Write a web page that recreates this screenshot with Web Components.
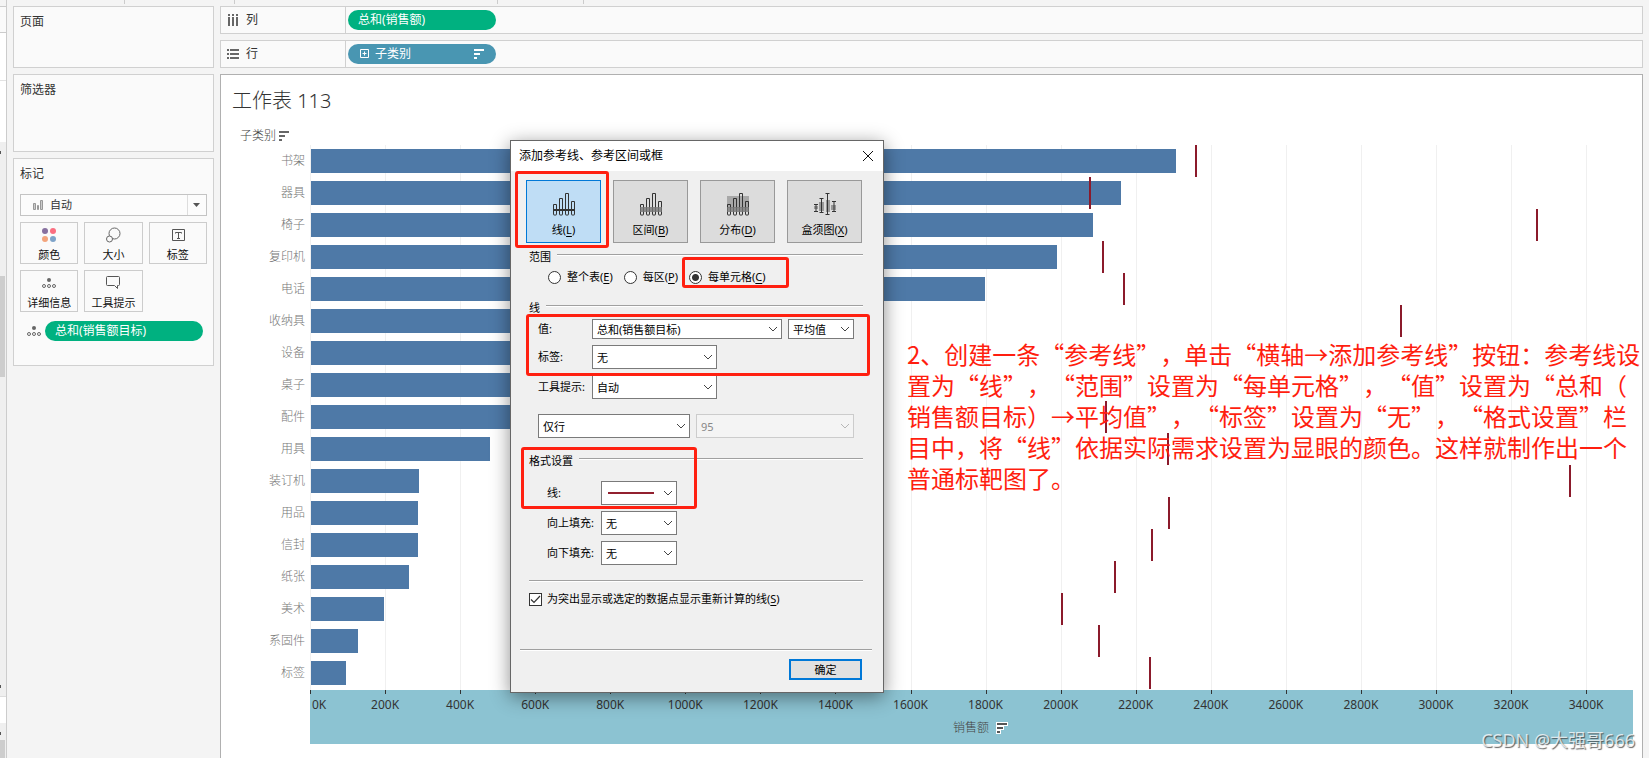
<!DOCTYPE html>
<html lang="zh-CN">
<head>
<meta charset="utf-8">
<title>工作表 113</title>
<style>
html, body { margin: 0; height: 100%; }
body {
  background: #f4f4f4; overflow: hidden; color: #333;
  font: 12px/16px "Noto Sans", "Noto Sans CJK SC", sans-serif;
}
</style>
</head>
<body>
<work-book></work-book>
<script>
const define = (name, html, setup) => customElements.define(name, class extends HTMLElement {
  constructor() {
    super();
    const t = document.createElement('template');
    t.innerHTML = html;
    this.attachShadow({ mode: 'open' }).append(t.content.cloneNode(true));
  }
  connectedCallback() {
    if (this.ready) return;
    this.ready = true;
    if (setup) setup(this, this.shadowRoot);
  }
});

/* ---------- icons ---------- */
const bars = '<path d="M.5 11.500v10q0 .5.5.5h2q.5 0 .5-.5v-10zM6.500 5.500v16q0 .5.5.5h2q.5 0 .5-.5v-16zM12.500.5v21q0 .5.5.5h2q.5 0 .5-.5V.5zM18.500 8.500v13q0 .5.5.5h2q.5 0 .5-.5v-13z" fill="none" stroke="#333"/>';
const ICONS = {
  columns: [12, 12, '<path d="M1 0h2v2H1zM5 0h2v2H5zM9 0h2v2H9zM1 3h2v9H1zM5 3h2v9H5zM9 3h2v9H9z" fill="#666"/>'],
  rows: [12, 12, '<path d="M0 1h2v2H0zM3 1h9v2H3zM0 5h2v2H0zM3 5h9v2H3zM0 9h2v2H0zM3 9h9v2H3z" fill="#666"/>'],
  sort: [10, 10, '<path d="M0 0h10v2H0zM0 4h6v2H0zM0 8h3v2H0z" fill="currentColor"/>'],
  sortlight: [12, 12, '<path d="M0 0h12v4H8v4H5v4H0z" fill="#fff"/><path d="M1 1h10v2H1zM1 5h6v2H1zM1 9h3v2H1z" fill="#555"/>'],
  plus: [10, 10, '<path d="M.5.5h8v8h-8zM2.500 4.500h4M4.500 2.500v4" fill="none" stroke="#fff"/>'],
  auto: [10, 10, '<path d="M.5 3.500h2v6h-2zM4.500 5.500h1v4h-1zM7.500.5h2v9h-2z" fill="#ccc" stroke="#999"/>'],
  color: [16, 16, '<circle cx="4" cy="4" r="3" fill="#87709f"/><circle cx="12" cy="4" r="3" fill="#fb6e80"/><circle cx="4" cy="12" r="3" fill="#f3a47c"/><circle cx="12" cy="12" r="3" fill="#7ea3c9"/>'],
  size: [16, 16, '<circle cx="9.500" cy="6.500" r="5.500" fill="none" stroke="#666"/><circle cx="4.500" cy="12" r="3" fill="#fafafa" stroke="#666"/>'],
  label: [16, 16, '<path d="M2.500 2.500h12v11h-12z" fill="none" stroke="#555"/><path d="M5.500 6.500v-1h6v1M8.500 5.500v6M7 11.500h3" fill="none" stroke="#555"/>'],
  detail: [16, 16, '<circle cx="8" cy="5" r="2" fill="#666"/><g fill="none" stroke="#666"><circle cx="3" cy="11" r="1.500"/><circle cx="8" cy="11" r="1.500"/><circle cx="13" cy="11" r="1.500"/></g>'],
  tooltip: [16, 16, '<path d="M1.500 2.500q0-1 1-1h11q1 0 1 1v7q0 1-1 1h-1v3l-3-3h-7q-1 0-1-1z" fill="none" stroke="#555"/>'],
  line: [22, 23, bars + '<path d="M0 16h22v2H0z" fill="#333"/>'],
  band: [22, 23, bars + '<path d="M0 14h22v5H0z" fill="#777" opacity=".8"/>'],
  dist: [22, 23, '<path d="M0 3h22v12H0z" fill="#a8a8a8"/>' + bars + '<path d="M0 14h22v5H0z" fill="#777" opacity=".8"/>'],
  box: [24, 23, '<path d="M1 13h4v3H1zM6 9h5v9H6zM13 7h4v12h-4zM18 12h5v5h-5z" fill="#999"/><path d="M1 11.500h4M3 11.500v7M1 18.500h4M6.500 5.500h4M8.500 5.500v14M6.500 19.500h4M12.500.5h4M14.500.5v21M12.500 21.500h4M19 8.500h4M21 8.500v10M19 18.500h4" fill="none" stroke="#333"/>'],
  close: [12, 12, '<path d="M1 1l10 10M11 1L1 11" stroke="#111" fill="none"/>'],
  caret: [8, 4, '<path d="M0 0h7L3.500 4z" fill="#555"/>'],
};
define('ui-icon', '<style>:host{display:block;flex:none;line-height:0}</style>', (el, root) => {
  const [w, h, body] = ICONS[el.getAttribute('name')];
  root.innerHTML += `<svg width="${w}" height="${h}" viewBox="0 0 ${w} ${h}" aria-hidden="true">${body}</svg>`;
});
const addIcon = (el, root) => {
  const i = document.createElement('ui-icon');
  i.setAttribute('name', el.getAttribute('icon'));
  root.querySelector('button').prepend(i);
};

/* ---------- left side ---------- */
define('data-strip', `<style>
:host{display:flex;flex-direction:column;flex:none;width:6px;border-right:1px solid #ccc;background:#efefef}
div{box-sizing:border-box;width:5px}
.edge{height:7px;width:6px;background:#f4f4f4;border-bottom:1px solid #ccc}
.top{height:26px;width:6px;border-bottom:1px solid #ccc;background:#fafafa}
.white{height:48px;width:6px;background:#fff;border-bottom:1px solid #e2e2e2}
.white.b{height:61px;border:0}
.track{height:134px}.thumb{height:101px;background:#cdcdcd}
.small{width:6px;height:27px;background:#fff;border-top:1px solid #ddd}
.foot{height:17px}.end{height:18px;background:#cdcdcd}
i{display:block;width:1px;height:3px;margin-top:9px;background:#555}
.gap{flex:1;display:flex;flex-direction:column;justify-content:flex-end;padding-bottom:8px}
</style><div class="edge"></div><div class="top"></div><div class="white"></div><div class="white b"></div>
<div class="track"><i></i></div><div class="thumb"></div><div class="gap"><i></i></div>
<div class="small"></div><div class="foot"><i></i></div><div class="end"></div>`);

define('side-card', `<style>
:host{display:block;box-sizing:border-box;border:1px solid #d0d0d0;background:#fafafa;padding:6px}
h2{margin:0;font-size:12px;line-height:18px;font-weight:400}
</style><h2></h2><slot></slot>`, (el, root) => root.querySelector('h2').textContent = el.getAttribute('heading'));

define('field-pill', `<style>
:host{display:flex;align-items:center;box-sizing:border-box;height:20px;border-radius:10px;background:#00b180;color:#fff;padding:0 12px 0 10px}
:host([dimension]){background:#4996b2;padding-left:12px}
span{flex:1;line-height:20px}
:host([dimension]) span{padding-left:5px}
</style><slot name="before"></slot><span><slot></slot></span><slot name="after"></slot>`);

define('mark-button', `<style>
:host{display:block}
button{display:flex;flex-direction:column;align-items:center;gap:2px;box-sizing:border-box;width:100%;height:42px;padding:4px 0 0;border:1px solid #ccc;background:#fafafa;color:#111;font:inherit;font-size:11px;line-height:20px}
</style><button type="button"><span><slot></slot></span></button>`, addIcon);

define('marks-panel', `<style>
:host{display:block;padding-top:11px}
.type{display:grid;grid-template-columns:12px 1fr 19px;align-items:center;box-sizing:border-box;height:22px;border:1px solid #c4c4c4;background:#fcfcfc;padding-left:12px}
select{appearance:none;border:0;background:none;font:inherit;font-size:11px;color:#333;padding:0 0 0 5px;height:20px;outline:0}
.type ui-icon:last-child{align-self:stretch;border-left:1px solid #ddd;padding:8px 0 0 5px}
.grid{display:grid;grid-template-columns:repeat(3,1fr);gap:6px;margin-top:6px}
.pill{display:flex;align-items:center;gap:3px;margin:9px 4px 17px 6px}
field-pill{flex:1}
</style>
<div class="type"><ui-icon name="auto"></ui-icon><select aria-label="标记类型"><option>自动</option></select><ui-icon name="caret"></ui-icon></div>
<div class="grid"><mark-button icon="color">颜色</mark-button><mark-button icon="size">大小</mark-button><mark-button icon="label">标签</mark-button><mark-button icon="detail">详细信息</mark-button><mark-button icon="tooltip">工具提示</mark-button></div>
<div class="pill"><ui-icon name="detail"></ui-icon><field-pill>总和(销售额目标)</field-pill></div>`);

/* ---------- shelves ---------- */
define('shelf-row', `<style>
:host{display:flex;box-sizing:border-box;height:28px;border:1px solid #d0d0d0;background:#fafafa}
.name{display:flex;align-items:center;gap:7px;box-sizing:border-box;width:125px;padding-left:6px;border-right:1px solid #d0d0d0}
.drop{flex:1;padding:3px 2px}
::slotted(field-pill){width:148px}
</style><div class="name"><slot name="icon"></slot><span></span></div><div class="drop"><slot></slot></div>`,
  (el, root) => root.querySelector('span').textContent = el.getAttribute('label'));

/* ---------- chart ---------- */
const MAX = 3525;
define('bullet-row', `<style>
:host{display:grid;grid-template-columns:89px 1fr;height:32px}
.cat{padding-right:5px;text-align:right;line-height:32px;color:#777;font-weight:300}
.plot{position:relative;padding:4px 0 4px 1px;height:24px}
.bar{height:24px;margin-right:1px;background:#4e79a7}
.ref{position:absolute;top:0;width:2px;height:32px;margin-left:-1px;background:#8b1a2b}
</style><div class="cat"><slot></slot></div><div class="plot"><div class="bar"></div></div>`,
  (el, root) => {
    root.querySelector('.bar').style.width = `calc(${el.getAttribute('value') / MAX * 100}% - 1px)`;
    if (el.hasAttribute('target')) {
      const r = document.createElement('div');
      r.className = 'ref';
      r.style.left = el.getAttribute('target') / MAX * 100 + '%';
      root.querySelector('.plot').append(r);
    }
  });

define('value-axis', `<style>
:host{display:block;box-sizing:border-box;height:54px;background:#8cc3d2;color:#333;position:relative}
.tick{position:absolute;top:0;width:1px;height:4px;background:#333}
.tick span{position:absolute;top:7px;left:0;transform:translateX(-50%);line-height:16px}
.tick.zero span{transform:none;left:2px}
.title{display:flex;justify-content:center;align-items:center;gap:7px;padding:30px 0 0 18px;color:#444;font-weight:300}
</style><div class="title">销售额<ui-icon name="sortlight"></ui-icon></div>`,
  (el, root) => {
    for (let v = 0; v <= 3400; v += 200) {
      const t = document.createElement('div');
      t.className = v ? 'tick' : 'tick zero';
      t.style.left = v / MAX * 100 + '%';
      t.innerHTML = `<span>${v}K</span>`;
      root.append(t);
    }
  });

const DATA = [['书架',2309,2360],['器具',2163,2078],['椅子',2089,3270],['复印机',1993,2112],['电话',1801,2168],['收纳具',1400,2906],['设备',1300],['桌子',1000],['配件',900,2120],['用具',480,2286],['装订机',290,3356],['用品',287,2290],['信封',287,2244],['纸张',263,2144],['美术',196,2003],['系固件',127,2102],['标签',95,2237]];
define('bullet-chart', `<style>
:host{display:block;padding-right:9px}
.head{display:flex;align-items:center;gap:3px;padding-left:19px;height:18px;color:#444;font-weight:300}
.head ui-icon{color:#666}
.area{position:relative}
.grid{position:absolute;inset:0 0 0 89px}
.grid i{position:absolute;top:0;bottom:0;width:1px;background:#f0f0f0}
.body{position:relative;padding-bottom:1px}
value-axis{margin-left:89px}
</style>
<div class="head">子类别<ui-icon name="sort"></ui-icon></div>
<div class="area"><div class="grid"></div><div class="body"></div></div>
<value-axis></value-axis>`,
  (el, root) => {
    root.querySelector('.body').innerHTML = DATA.map(([n, v, t]) => `<bullet-row value="${v}"${t ? ` target="${t}"` : ''}>${n}</bullet-row>`).join('');
    let g = '';
    for (let v = 0; v <= 3400; v += 200) g += `<i style="left:${v / MAX * 100}%"></i>`;
    root.querySelector('.grid').innerHTML = g;
  });

define('work-sheet', `<style>
:host{display:block;box-sizing:border-box;border:1px solid #b0b0b0;background:#fff;padding-top:11px}
h1{margin:0 0 11px 11px;font-size:20px;line-height:30px;font-weight:300;color:#333}
</style><h1>工作表 113</h1><bullet-chart></bullet-chart>`);

/* ---------- dialog ---------- */
define('chart-kind', `<style>
:host{display:block}
button{display:flex;flex-direction:column;align-items:center;box-sizing:border-box;width:75px;height:63px;padding:12px 0 0;border:1px solid #999;background:#dcdcdc;color:#000;font:inherit;gap:6px}
:host([selected]) button{border-color:#0078d7;background:#bfddf5}
</style><button type="button"><span><slot></slot></span></button>`, addIcon);

define('group-rule', `<style>
:host{display:flex;gap:6px;height:16px;line-height:18px}
i{flex:1;height:1px;margin-top:6px;background:#a0a0a0;border-bottom:1px solid #fff}
</style><slot></slot><i></i>`);

define('radio-choice', `<style>
:host{display:block}
label{display:flex;align-items:center;gap:6px;height:16px;line-height:18px}
input{appearance:none;box-sizing:border-box;width:13px;height:13px;margin:0;border:1px solid #333;border-radius:50%;background:#fff}
input:checked{background:radial-gradient(circle,#333 0 3px,#fff 4px)}
</style><label><input type="radio"><span><slot></slot></span></label>`,
  (el, root) => root.querySelector('input').checked = el.hasAttribute('checked'));

define('combo-field', `<style>
:host{display:flex;align-items:center}
label{width:var(--label,54px);line-height:18px}
label:empty{display:none}
.box{position:relative;box-sizing:border-box;width:var(--w,125px);height:var(--h,24px);border:1px solid #7a7a7a;background:#fff;display:flex;align-items:center}
select{appearance:none;box-sizing:border-box;flex:1;min-width:0;height:100%;border:0;margin:0;padding:2px 20px 0 4px;background:none;color:#000;font:inherit;outline:0}
svg{position:absolute;right:3px;top:calc(50% - 3px);pointer-events:none}
.stroke{position:absolute;left:6px;top:10px;width:46px;height:2px;background:#92202f}
:host([disabled]) .box{border-color:#ccc;background:#f4f4f4}
:host([disabled]) select{color:#888;opacity:1}
:host([disabled]) svg{opacity:.35}
</style><label for="s"></label><div class="box"><select id="s"><option></option></select><svg width="10" height="7" viewBox="0 0 10 7" aria-hidden="true"><path d="M1 1l4 4 4-4" fill="none" stroke="#444"/></svg></div>`,
  (el, root) => {
    root.querySelector('label').textContent = el.getAttribute('label') || '';
    root.querySelector('option').textContent = el.getAttribute('value') || '';
    const s = root.querySelector('select');
    s.disabled = el.hasAttribute('disabled');
    if (!el.hasAttribute('label')) s.setAttribute('aria-label', el.getAttribute('name'));
    if (el.hasAttribute('stroke')) root.querySelector('.box').insertAdjacentHTML('beforeend', '<span class="stroke"></span>');
  });

define('mark-frame', `<style>:host{position:absolute;box-sizing:border-box;border:3px solid #ff2010;border-radius:3px;pointer-events:none}</style>`);

define('reference-dialog', `<style>
:host{display:block;box-sizing:border-box;width:374px;border:1px solid #666;background:#f0f0f0;box-shadow:0 4px 18px rgba(0,0,0,.45);color:#000;font-size:11px;line-height:16px}
header{display:flex;align-items:center;justify-content:space-between;height:30px;padding:0 9px 0 8px;background:#fff}
h2{margin:0;font-size:12px;line-height:16px;font-weight:400}
.x{border:0;padding:0;background:none}
u{text-underline-offset:2px}
.kinds{display:flex;gap:12px;padding:9px 15px 0}
main{padding:0 20px 0 18px}
group-rule.scope{margin-top:5px}
.radios{display:flex;gap:11px;padding:5px 0 0 19px}
group-rule.line{margin-top:14px}
.fields{display:grid;gap:6px;padding:4px 0 0 9px}
.pair{display:flex;gap:6px}
.pair.value{--h:20px}
.pair.conf{margin-top:9px}
group-rule.format{margin-top:14px}
.format-fields{display:grid;gap:6px;padding:13px 0 0 18px;--w:76px}
hr{margin:15px 0 9px;border:0;height:1px;background:#a0a0a0;border-bottom:1px solid #fff}
.check{display:flex;align-items:center;gap:5px}
.check input{appearance:none;box-sizing:border-box;width:13px;height:13px;margin:0;border:1px solid #333;background:#fff url("data:image/svg+xml,%3Csvg xmlns='http://www.w3.org/2000/svg' width='11' height='11'%3E%3Cpath d='M1 5.500l3 3 6-6.500' fill='none' stroke='%23333' stroke-width='1.200'/%3E%3C/svg%3E")}
footer{margin:42px 11px 0 9px;padding:9px 10px 12px;border-top:1px solid #a0a0a0;box-shadow:inset 0 1px #fff;display:flex;justify-content:flex-end}
.ok{box-sizing:border-box;width:73px;height:21px;padding:0;border:2px solid #0078d7;background:#e1e1e1;color:#000;font:inherit}
mark-frame.a{left:4px;top:30px;width:94px;height:77px}
mark-frame.b{left:171px;top:116px;width:107px;height:31px}
mark-frame.c{left:15px;top:173px;width:344px;height:62px}
mark-frame.d{left:10px;top:306px;width:176px;height:62px}
</style>
<header><h2>添加参考线、参考区间或框</h2><button class="x" type="button" aria-label="关闭"><ui-icon name="close"></ui-icon></button></header>
<div class="kinds"><chart-kind icon="line" selected>线(<u>L</u>)</chart-kind><chart-kind icon="band">区间(<u>B</u>)</chart-kind><chart-kind icon="dist">分布(<u>D</u>)</chart-kind><chart-kind icon="box">盒须图(<u>X</u>)</chart-kind></div>
<main>
<group-rule class="scope">范围</group-rule>
<div class="radios"><radio-choice>整个表(<u>E</u>)</radio-choice><radio-choice>每区(<u>P</u>)</radio-choice><radio-choice checked>每单元格(<u>C</u>)</radio-choice></div>
<group-rule class="line">线</group-rule>
<div class="fields">
<div class="pair value"><combo-field label="值:" value="总和(销售额目标)" style="--w:190px"></combo-field><combo-field name="聚合" value="平均值" style="--w:66px"></combo-field></div>
<combo-field label="标签:" value="无"></combo-field>
<combo-field label="工具提示:" value="自动"></combo-field>
<div class="pair conf"><combo-field name="计算" value="仅行" style="--w:152px"></combo-field><combo-field name="置信" value="95" disabled style="--w:158px"></combo-field></div>
</div>
<group-rule class="format">格式设置</group-rule>
<div class="format-fields"><combo-field label="线:" stroke></combo-field><combo-field label="向上填充:" value="无"></combo-field><combo-field label="向下填充:" value="无"></combo-field></div>
<hr>
<label class="check"><input type="checkbox" checked><span>为突出显示或选定的数据点显示重新计算的线(<u>S</u>)</span></label>
</main>
<footer><button class="ok" type="button">确定</button></footer>
<mark-frame class="a"></mark-frame><mark-frame class="b"></mark-frame><mark-frame class="c"></mark-frame><mark-frame class="d"></mark-frame>`);

define('step-note', `<style>
:host{display:block;color:#ff1e0f;font:24px/31px "Noto Sans CJK SC",sans-serif;white-space:nowrap;text-spacing-trim:space-all}
p{margin:0}
</style><p>2、创建一条“参考线”，单击“横轴→添加参考线”按钮：参考线设<br>置为“线”，“范围”设置为“每单元格”，“值”设置为“总和（<br>销售额目标）→平均值”，“标签”设置为“无”，“格式设置”栏<br>目中，将“线”依据实际需求设置为显眼的颜色。这样就制作出一个<br>普通标靶图了。</p>`);

/* ---------- page ---------- */
define('work-book', `<style>
:host{display:flex;position:relative;min-height:100vh}
aside{display:flex;flex-direction:column;gap:6px;flex:none;width:201px;padding:6px 6px 0}
.pages{height:62px}.filters{height:78px}.marks{min-height:208px}
section{display:flex;flex-direction:column;gap:6px;flex:1;min-width:0;padding:6px 6px 0 0}
work-sheet{flex:1;border-bottom:0}
.ticks{position:absolute;top:0;height:4px;width:1px;background:#ccc;left:124px;box-shadow:110px 0 #ccc,373px 0 #ccc,459px 0 #ccc}
reference-dialog{position:absolute;left:510px;top:140px}
step-note{position:absolute;left:907px;top:338px}
.mark{position:absolute;right:14px;bottom:6px;font-size:18px;line-height:24px;color:rgba(255,255,255,.75);text-shadow:1px 1px 1px rgba(60,60,60,.8)}
</style>
<data-strip></data-strip>
<aside><side-card class="pages" heading="页面"></side-card><side-card class="filters" heading="筛选器"></side-card><side-card class="marks" heading="标记"><marks-panel></marks-panel></side-card></aside>
<section>
<shelf-row label="列"><ui-icon slot="icon" name="columns"></ui-icon><field-pill>总和(销售额)</field-pill></shelf-row>
<shelf-row label="行"><ui-icon slot="icon" name="rows"></ui-icon><field-pill dimension><ui-icon slot="before" name="plus"></ui-icon>子类别<ui-icon slot="after" name="sort"></ui-icon></field-pill></shelf-row>
<work-sheet></work-sheet>
</section>
<div class="ticks"></div>
<reference-dialog></reference-dialog>
<step-note></step-note>
<div class="mark">CSDN @大强哥666</div>`);
</script>
</body>
</html>
